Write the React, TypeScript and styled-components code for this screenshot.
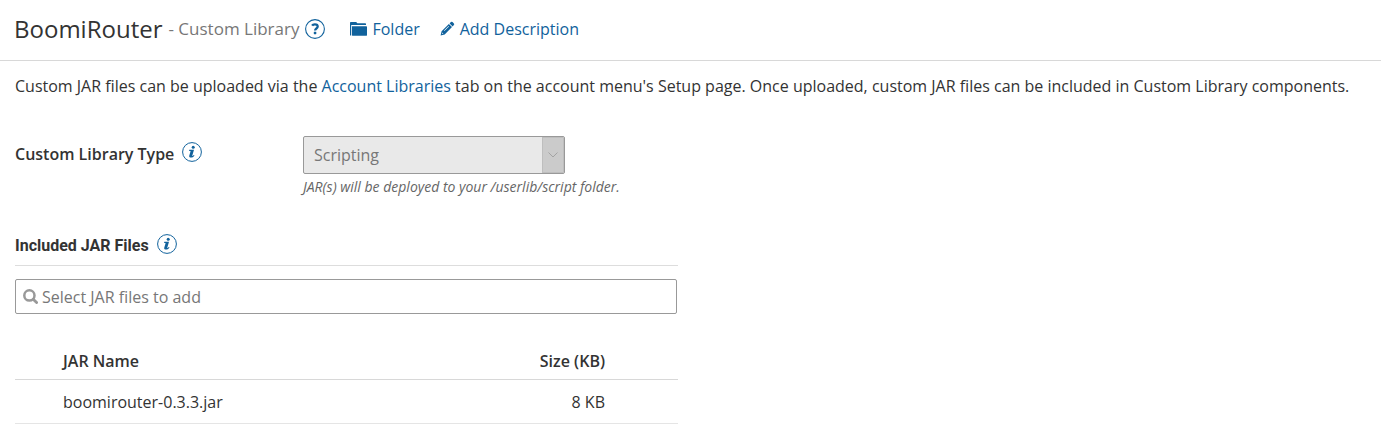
import React from "react";
import styled, { createGlobalStyle } from "styled-components";

const GlobalStyle = createGlobalStyle`
  *, *::before, *::after { box-sizing: border-box; }
  body {
    margin: 0;
    background: #fff;
    color: #333;
    font-family: "Open Sans", "Noto Sans", sans-serif;
    font-size: 16px;
    line-height: 24px;
  }
`;

const Header = styled.header`
  display: flex;
  align-items: center;
  min-height: 61px;
  padding: 0 15px 3px 14px;
  border-bottom: 1px solid #d8d8d8;
`;

const Title = styled.h1`
  margin: 0;
  font-size: 24px;
  font-weight: 400;
  line-height: 32px;
`;

const Subtitle = styled.span`
  margin: 0 6px;
  font-size: 17px;
  color: #777;
`;

const Actions = styled.nav`
  display: flex;
  gap: 20px;
  margin-left: 25px;
`;

const Link = styled.a`
  color: #11629c;
  text-decoration: none;
`;

const ActionLink = styled(Link)`
  display: flex;
  align-items: center;
  gap: 5px;
`;

const IconButton = styled.button`
  display: block;
  padding: 0;
  border: 0;
  background: none;
  line-height: 0;
`;

const Main = styled.main`
  padding: 13px 10px 0 15px;
`;

const Intro = styled.p`
  margin: 0;
`;

const Field = styled.div`
  display: grid;
  grid-template-columns: 288px 1fr;
  align-items: start;
  margin-top: 38px;
`;

const LabelRow = styled.div`
  display: flex;
  align-items: flex-start;
  gap: 8px;
  padding-top: 6px;
`;

const Label = styled.label`
  font-weight: 600;
`;

const SelectBox = styled.div`
  display: grid;
  grid-template-columns: 1fr 22px;
  width: 262px;
  height: 38px;
  border: 1px solid #999;
  border-radius: 2px;
  background: #e9e9e9;
  overflow: hidden;
`;

const Select = styled.select`
  grid-row: 1;
  grid-column: 1 / -1;
  min-width: 0;
  padding: 0 10px;
  border: 0;
  background: transparent;
  color: #777;
  font: inherit;
  appearance: none;
  opacity: 1;
`;

const SelectArrow = styled.span`
  display: flex;
  align-items: center;
  justify-content: center;
  grid-row: 1;
  grid-column: 2;
  border: 1px solid #bebebe;
  background: #cbcbcb;
  pointer-events: none;
`;

const Hint = styled.p`
  margin: 2px 0 0;
  font-size: 14px;
  font-style: italic;
  line-height: 22px;
  color: #666;
`;

const Panel = styled.section`
  width: 663px;
  max-width: 100%;
  margin-top: 36px;
`;

const PanelHeader = styled.div`
  display: flex;
  align-items: flex-start;
  gap: 8px;
  padding-bottom: 7px;
  border-bottom: 1px solid #ddd;
`;

const PanelTitle = styled.h2`
  margin: 0;
  font-family: Roboto, sans-serif;
  font-size: 16px;
  font-weight: 700;
  line-height: 24px;
`;

const SearchBox = styled.label`
  display: flex;
  align-items: center;
  gap: 4px;
  height: 35px;
  margin: 13px 1px 0 0;
  padding: 0 7px;
  border: 1px solid #999;
  border-radius: 2px;
`;

const SearchInput = styled.input`
  flex: 1;
  min-width: 0;
  padding: 0;
  border: 0;
  outline: 0;
  background: none;
  color: #333;
  font: inherit;
  &::placeholder { color: #777; opacity: 1; }
`;

const Table = styled.table`
  width: 100%;
  margin-top: 28px;
  border-collapse: collapse;
`;

const Cell = styled.td<{ $end?: boolean }>`
  height: 44px;
  padding: ${(p) => (p.$end ? "2px 73px 0 0" : "2px 0 0 48px")};
  border-bottom: 1px solid #e5e5e5;
  text-align: ${(p) => (p.$end ? "right" : "left")};
  font-weight: 400;
`;

const HeadCell = styled(Cell)`
  height: 37px;
  border-bottom-color: #d8d8d8;
  font-weight: 600;
`;

const InfoIcon = () => (
  <svg width="20" height="20" viewBox="0 0 20 20" fill="none" aria-hidden="true">
    <circle cx="10" cy="10" r="9.4" stroke="#11629c" strokeWidth="1" />
    <circle cx="11.2" cy="5.2" r="1.5" fill="#11629c" />
    <path
      d="M7.3 7.8h4.7l-1.7 5.6c-.2.7.1.9.6.4l1-.9.6.5c-1.1 1.5-2.4 2.2-3.6 2.2-1.4 0-2-.9-1.6-2.2l1.2-3.9c.1-.5 0-.6-.5-.6h-.9z"
      fill="#11629c"
    />
  </svg>
);

const HelpIcon = () => (
  <svg width="20" height="20" viewBox="0 0 20 20" fill="none" aria-hidden="true">
    <circle cx="10" cy="10" r="9.4" stroke="#11629c" strokeWidth="1.1" />
    <path
      d="M7.1 6.6C7.6 5.7 8.6 5.3 9.9 5.3c1.8 0 2.8.8 2.8 2.2 0 2.1-2.6 1.9-2.6 4"
      stroke="#11629c"
      strokeWidth="2.3"
    />
    <rect x="8.8" y="12.7" width="2.5" height="2.5" rx=".4" fill="#11629c" />
  </svg>
);

const FolderIcon = () => (
  <svg width="17" height="14" viewBox="0 0 17 14" fill="#11629c" aria-hidden="true">
    <path d="M0 .8Q0 0 .8 0h5.4l1.2 1.2h7.9q.7 0 .7.8v1H1.2v10.5H.6Q0 13.5 0 13z" />
    <path d="M2 4.2h14.3q.7 0 .7.7v8q0 .9-.9.9H2.8q-.8 0-.8-.9z" />
  </svg>
);

const PencilIcon = () => (
  <svg width="15" height="15" viewBox="0 0 15 15" fill="#11629c" aria-hidden="true">
    <path d="M9.6 2.4 12.6 5.4 13.9 4.1q.7-.8 0-1.6L12.5 1.1q-.8-.7-1.6 0z" />
    <path
      fillRule="evenodd"
      d="M8.9 3 12 6.1 4.7 13.4 .6 14.4 1.6 10.3zM8.6 5 4 9.6l.4.4L9 5.4zM2.4 11.6l-.4 1.4 1.4-.4z"
    />
  </svg>
);

const SearchIcon = () => (
  <svg width="15" height="15" viewBox="0 0 15 15" fill="none" aria-hidden="true">
    <circle cx="6.4" cy="6.4" r="5.1" stroke="#999" strokeWidth="2.5" />
    <path d="m10.2 10.2 3.4 3.4" stroke="#999" strokeWidth="2.8" strokeLinecap="round" />
  </svg>
);

const files = [{ name: "boomirouter-0.3.3.jar", size: "8 KB" }];

export default function App() {
  return (
    <>
      <GlobalStyle />
      <Header>
        <Title>BoomiRouter</Title>
        <Subtitle>- Custom Library</Subtitle>
        <IconButton type="button" aria-label="Help">
          <HelpIcon />
        </IconButton>
        <Actions>
          <ActionLink href="#folder">
            <FolderIcon />
            Folder
          </ActionLink>
          <ActionLink href="#description">
            <PencilIcon />
            Add Description
          </ActionLink>
        </Actions>
      </Header>
      <Main>
        <Intro>
          Custom JAR files can be uploaded via the <Link href="#libraries">Account Libraries</Link> tab on
          the account menu's Setup page. Once uploaded, custom JAR files can be included in Custom Library
          components.
        </Intro>
        <Field>
          <LabelRow>
            <Label htmlFor="library-type">Custom Library Type</Label>
            <IconButton type="button" aria-label="About library types">
              <InfoIcon />
            </IconButton>
          </LabelRow>
          <div>
            <SelectBox>
              <Select id="library-type" disabled defaultValue="scripting">
                <option value="scripting">Scripting</option>
              </Select>
              <SelectArrow>
                <svg width="10" height="6" viewBox="0 0 10 6" fill="none" aria-hidden="true">
                  <path d="m.5.5 4.5 4.5L9.5.5" stroke="#a3a3a3" />
                </svg>
              </SelectArrow>
            </SelectBox>
            <Hint>JAR(s) will be deployed to your /userlib/script folder.</Hint>
          </div>
        </Field>
        <Panel>
          <PanelHeader>
            <PanelTitle>Included JAR Files</PanelTitle>
            <IconButton type="button" aria-label="About JAR files">
              <InfoIcon />
            </IconButton>
          </PanelHeader>
          <SearchBox>
            <SearchIcon />
            <SearchInput type="text" placeholder="Select JAR files to add" aria-label="Select JAR files to add" />
          </SearchBox>
          <Table>
            <thead>
              <tr>
                <HeadCell as="th" scope="col">JAR Name</HeadCell>
                <HeadCell as="th" scope="col" $end>Size (KB)</HeadCell>
              </tr>
            </thead>
            <tbody>
              {files.map((file) => (
                <tr key={file.name}>
                  <Cell>{file.name}</Cell>
                  <Cell $end>{file.size}</Cell>
                </tr>
              ))}
            </tbody>
          </Table>
        </Panel>
      </Main>
    </>
  );
}
